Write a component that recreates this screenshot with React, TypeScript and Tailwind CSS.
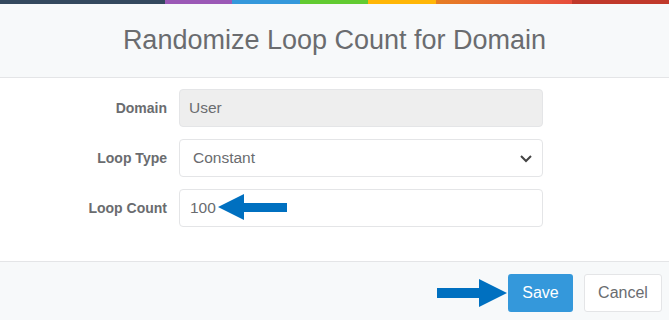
import React from "react";

const font = { fontFamily: '"Liberation Sans", Arial, sans-serif' };

export default function App() {
  return (
    <div className="w-[669px] h-[320px] bg-white overflow-hidden relative" style={font}>
      <div className="flex h-[4px]">
        <div className="w-[165px] bg-[#34495e]" />
        <div className="w-[67px] bg-[#9b59b6]" />
        <div className="w-[68px] bg-[#3498db]" />
        <div className="w-[68px] bg-[#62cb31]" />
        <div className="w-[68px] bg-[#ffb606]" />
        <div className="w-[136px] bg-gradient-to-r from-[#e67e22] to-[#e74c3c]" />
        <div className="flex-1 bg-[#c0392b]" />
      </div>
      <div className="h-[74px] bg-[#f7f9fa] border-b border-[#e4e5e7] flex items-center justify-center">
        <h1 className="text-[27px] text-[#6a6c6f] font-normal">Randomize Loop Count for Domain</h1>
      </div>
      <div className="h-[183px] pt-[11px] flex flex-col gap-[12px]">
        <div className="flex items-center h-[38px]">
          <div className="w-[167px] text-right text-[14px] font-bold text-[#6a6c6f]">Domain</div>
          <div className="ml-[12px] w-[364px] h-[38px] rounded-[4px] border border-[#e4e5e7] bg-[#eeeeee] flex items-center px-[9px] text-[15.5px] text-[#6a6c6f]">
            User
          </div>
        </div>
        <div className="flex items-center h-[38px]">
          <div className="w-[167px] text-right text-[14px] font-bold text-[#6a6c6f]">Loop Type</div>
          <div className="ml-[12px] w-[364px] h-[38px] rounded-[4px] border border-[#e4e5e7] bg-white flex items-center justify-between pl-[13px] pr-[9px] text-[15.5px] text-[#6a6c6f]">
            <span>Constant</span>
            <svg width="14" height="10" viewBox="0 0 14 10">
              <polyline points="2,3 7,8 12,3" fill="none" stroke="#444" strokeWidth="2" />
            </svg>
          </div>
        </div>
        <div className="flex items-center h-[38px]">
          <div className="w-[167px] text-right text-[14px] font-bold text-[#6a6c6f]">Loop Count</div>
          <div className="relative ml-[12px] w-[364px] h-[38px] rounded-[4px] border border-[#e4e5e7] bg-white flex items-center px-[10px] text-[15.5px] text-[#6a6c6f]">
            100
            <svg className="absolute left-[37px] top-[4px]" width="70" height="28" viewBox="0 0 70 28">
              <polygon points="1,13 27,0 27,9 70,9 70,18 27,18 27,26" fill="#0070c0" />
            </svg>
          </div>
        </div>
      </div>
      <div className="relative h-[63px] bg-[#f7f9fa] border-t border-[#e4e5e7] flex justify-end items-start pt-[12px] pr-[7px] gap-[11px]">
        <svg className="absolute left-[437px] top-[17px]" width="71" height="28" viewBox="0 0 71 28">
          <polygon points="0,9 42,9 42,0 70,14 42,28 42,19 0,19" fill="#0070c0" />
        </svg>
        <button className="w-[65px] h-[38px] rounded-[3px] bg-[#3498db] text-white text-[16px]">Save</button>
        <button className="w-[78px] h-[38px] rounded-[3px] bg-white border border-[#e4e5e7] text-[#6a6c6f] text-[16px]">Cancel</button>
      </div>
    </div>
  );
}
